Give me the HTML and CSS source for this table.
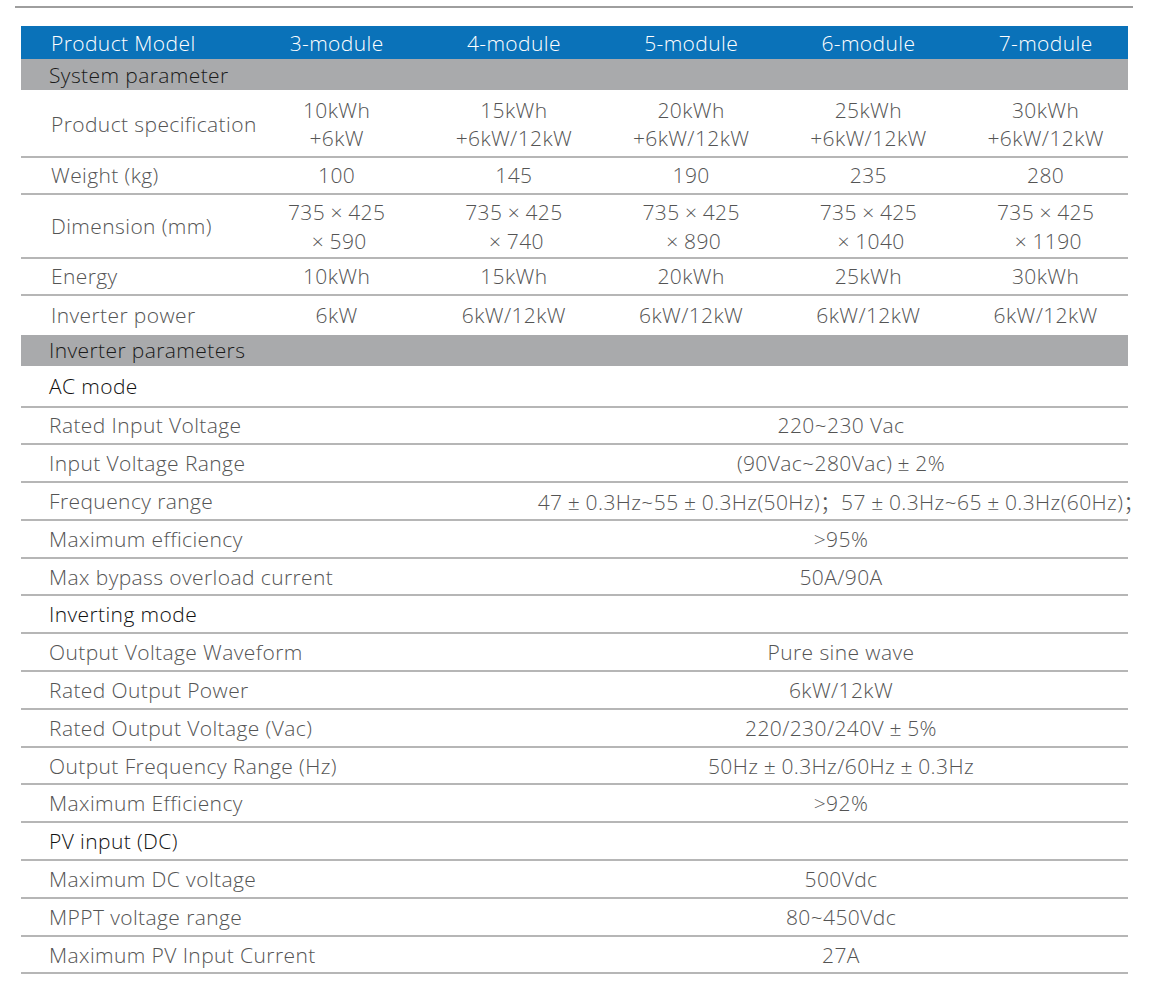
FILE: index.html
```html
<!DOCTYPE html>
<html lang="en">
<head>
<meta charset="utf-8">
<title>Product parameters</title>
<link rel="stylesheet" href="styles.css">
</head>
<body>
<div class="page">
  <div class="rule"></div>
  <div class="table">
    <div class="row head">
      <div class="lab">Product Model</div>
      <div class="c">3-module</div>
      <div class="c">4-module</div>
      <div class="c">5-module</div>
      <div class="c">6-module</div>
      <div class="c">7-module</div>
    </div>
    <div class="band">System parameter</div>
    <div class="row spec">
      <div class="lab">Product specification</div>
      <div class="c"><span>10kWh</span><span>+6kW</span></div>
      <div class="c"><span>15kWh</span><span>+6kW/12kW</span></div>
      <div class="c"><span>20kWh</span><span>+6kW/12kW</span></div>
      <div class="c"><span>25kWh</span><span>+6kW/12kW</span></div>
      <div class="c"><span>30kWh</span><span>+6kW/12kW</span></div>
    </div>
    <div class="row std">
      <div class="lab">Weight (kg)</div>
      <div class="c">100</div>
      <div class="c">145</div>
      <div class="c">190</div>
      <div class="c">235</div>
      <div class="c">280</div>
    </div>
    <div class="row dim">
      <div class="lab">Dimension (mm)</div>
      <div class="c"><span>735<i class="x">×</i>425</span><span><i class="x">×</i>590</span></div>
      <div class="c"><span>735<i class="x">×</i>425</span><span><i class="x">×</i>740</span></div>
      <div class="c"><span>735<i class="x">×</i>425</span><span><i class="x">×</i>890</span></div>
      <div class="c"><span>735<i class="x">×</i>425</span><span><i class="x">×</i>1040</span></div>
      <div class="c"><span>735<i class="x">×</i>425</span><span><i class="x">×</i>1190</span></div>
    </div>
    <div class="row std">
      <div class="lab">Energy</div>
      <div class="c">10kWh</div>
      <div class="c">15kWh</div>
      <div class="c">20kWh</div>
      <div class="c">25kWh</div>
      <div class="c">30kWh</div>
    </div>
    <div class="row last">
      <div class="lab">Inverter power</div>
      <div class="c">6kW</div>
      <div class="c">6kW/12kW</div>
      <div class="c">6kW/12kW</div>
      <div class="c">6kW/12kW</div>
      <div class="c">6kW/12kW</div>
    </div>
    <div class="band">Inverter parameters</div>
    <div class="sub first">AC mode</div>
    <div class="srow"><div class="lab">Rated Input Voltage</div><div class="val"><span>220~230 Vac</span></div></div>
    <div class="srow"><div class="lab">Input Voltage Range</div><div class="val"><span>(90Vac~280Vac)<i class="x">±</i>2%</span></div></div>
    <div class="srow"><div class="lab">Frequency range</div><div class="val"><span>47<i class="x">±</i>0.3Hz~55<i class="x">±</i>0.3Hz(50Hz)<i class="sc">；</i>57<i class="x">±</i>0.3Hz~65<i class="x">±</i>0.3Hz(60Hz)<i class="sc">；</i></span></div></div>
    <div class="srow"><div class="lab">Maximum efficiency</div><div class="val"><span>&gt;95%</span></div></div>
    <div class="srow"><div class="lab">Max bypass overload current</div><div class="val"><span>50A/90A</span></div></div>
    <div class="sub">Inverting mode</div>
    <div class="srow"><div class="lab">Output Voltage Waveform</div><div class="val"><span>Pure sine wave</span></div></div>
    <div class="srow"><div class="lab">Rated Output Power</div><div class="val"><span>6kW/12kW</span></div></div>
    <div class="srow"><div class="lab">Rated Output Voltage (Vac)</div><div class="val"><span>220/230/240V<i class="x">±</i>5%</span></div></div>
    <div class="srow"><div class="lab">Output Frequency Range (Hz)</div><div class="val"><span>50Hz<i class="x">±</i>0.3Hz/60Hz<i class="x">±</i>0.3Hz</span></div></div>
    <div class="srow"><div class="lab">Maximum Efficiency</div><div class="val"><span>&gt;92%</span></div></div>
    <div class="sub">PV input (DC)</div>
    <div class="srow"><div class="lab">Maximum DC voltage</div><div class="val"><span>500Vdc</span></div></div>
    <div class="srow"><div class="lab">MPPT voltage range</div><div class="val"><span>80~450Vdc</span></div></div>
    <div class="srow"><div class="lab">Maximum PV Input Current</div><div class="val"><span>27A</span></div></div>
  </div>
</div>
</body>
</html>
```

FILE: styles.css
```css
* { box-sizing: border-box; }

html, body {
  margin: 0;
  padding: 0;
  background: #ffffff;
}

body {
  font-family: "Open Sans", "Noto Sans", "Noto Sans CJK SC", sans-serif;
  font-size: 21px;
  font-weight: 300;
  letter-spacing: 0.4px;
  color: #545454;
}

.page {
  padding: 6px 0 0 15px;
  width: 1164px;
}

.rule {
  width: 1118px;
  height: 2px;
  background: #9e9e9e;
}

.table {
  width: 1107px;
  margin: 18px 0 0 6px;
}

.row {
  display: grid;
  grid-template-columns: 227px repeat(5, 177.25px);
  align-items: center;
  border-bottom: 2px solid #b6b6b6;
}

.row .lab {
  padding-left: 30px;
  white-space: nowrap;
}

.c {
  display: flex;
  flex-direction: column;
  align-items: center;
  text-align: center;
  white-space: nowrap;
}

.head {
  height: 33px;
  background: #0a72b9;
  color: #ffffff;
  border-bottom: 0;
}

.band {
  height: 31px;
  background: #a9aaac;
  color: #1a1a1a;
  padding-left: 28px;
  display: flex;
  align-items: center;
}

.spec {
  height: 67.5px;
  line-height: 28.7px;
  padding-top: 3px;
}

.std {
  height: 37px;
}

.dim {
  height: 64px;
  line-height: 28.7px;
  padding-top: 2px;
}

.last {
  height: 39px;
  border-bottom: 0;
}

.x {
  font-style: normal;
  display: inline-block;
  width: 1.1em;
  text-align: center;
}

.sc {
  font-style: normal;
  display: inline-block;
  width: 1em;
  text-align: left;
}

.sub {
  height: 37.8px;
  padding-left: 28px;
  color: #111111;
  display: flex;
  align-items: center;
  border-bottom: 2px solid #b6b6b6;
}

.sub.first {
  height: 42px;
}

.srow {
  display: grid;
  grid-template-columns: 533px 574px;
  align-items: center;
  height: 37.8px;
  border-bottom: 2px solid #b6b6b6;
}

.srow .lab {
  padding-left: 28px;
  white-space: nowrap;
}

.val {
  display: flex;
  justify-content: center;
  white-space: nowrap;
}

.val > span {
  flex-shrink: 0;
}
```
